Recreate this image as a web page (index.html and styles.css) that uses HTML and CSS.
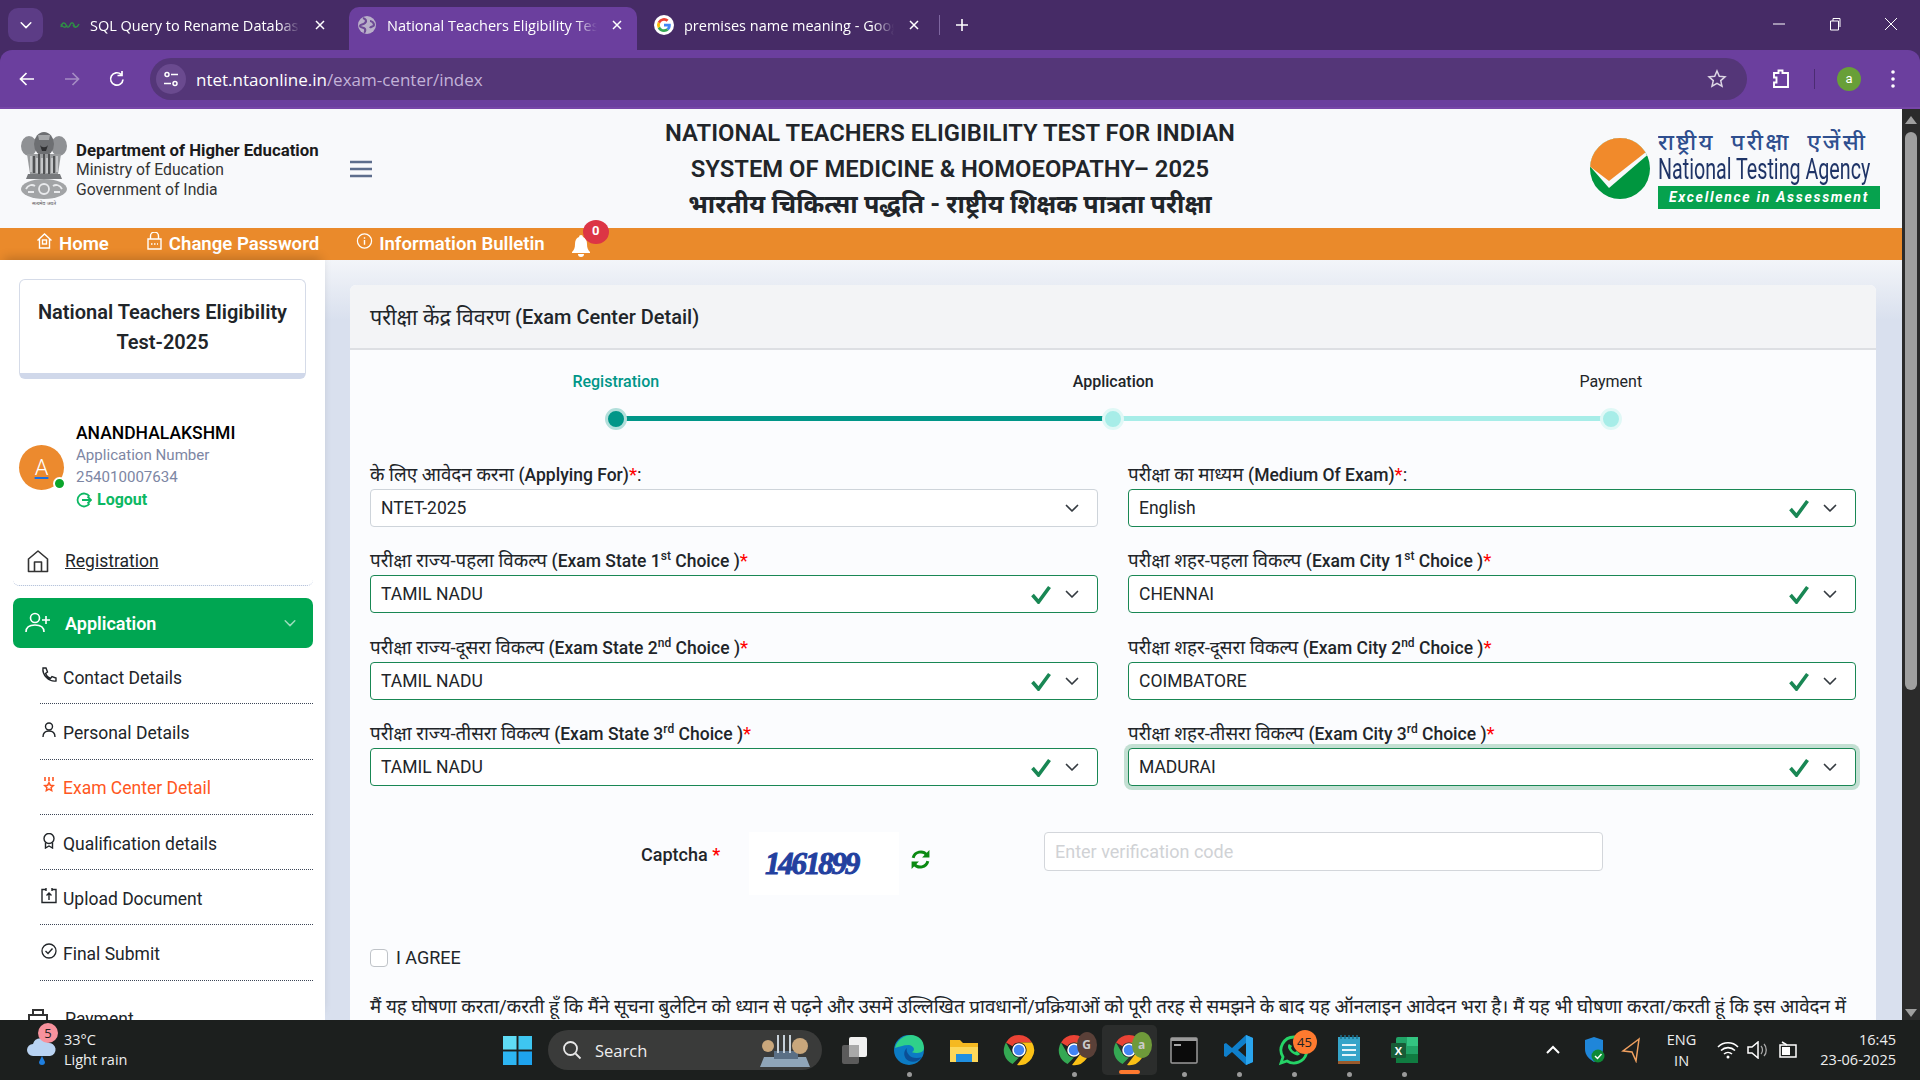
FILE: index.html
```html
<!DOCTYPE html>
<html lang="hi">
<head>
    <meta charset="UTF-8">
    <title>National Teachers Eligibility Test</title>
    <link rel="stylesheet" href="styles.css">
</head>
<body>
    <svg class="defs" width="0" height="0">
        <symbol id="chev" viewBox="0 0 16 16"><path d="M2.500 5.500 8 11l5.500-5.500" fill="none" stroke="currentColor" stroke-width="1.700" stroke-linecap="round" stroke-linejoin="round"/></symbol>
        <symbol id="tick" viewBox="0 0 20 20"><path d="M1.500 11 7.500 18 18.500 3" fill="none" stroke="#198754" stroke-width="3.600"/></symbol>
        <symbol id="close" viewBox="0 0 12 12"><path d="M2 2l8 8M10 2l-8 8" stroke="currentColor" stroke-width="1.500" fill="none"/></symbol>
        <symbol id="chrome" viewBox="0 0 32 32">
            <path d="M16 1a15 15 0 0 1 13 7.500H16a7.500 7.500 0 0 0-6.500 3.750L3 8.500A15 15 0 0 1 16 1z" fill="#ea4335"/>
            <path d="M3 8.500l6.500 11.250A7.500 7.500 0 0 0 16 23.500l-6.500 6.500A15 15 0 0 1 3 8.500z" fill="#34a853"/>
            <path d="M29 8.500A15 15 0 0 1 14 31l8.500-11.250A7.500 7.500 0 0 0 16 8.500z" fill="#fbc116"/>
            <circle cx="16" cy="16" r="6" fill="#4285f4" stroke="#fff" stroke-width="1.500"/>
        </symbol>
    </svg>

    <div class="tabstrip">
        <div class="tab-list-btn"><svg width="14" height="14"><use href="#chev"/></svg></div>
        <div class="tab">
            <svg class="tab-icon" viewBox="0 0 20 20"><path d="M1 12c1-5 4-5 5-2s3 3 4 0 3-3 4 0 3 3 5-1M1 9c2 4 5 4 6 1M19 9c-2 4-5 4-6 1" fill="none" stroke="#2f8d46" stroke-width="1.500"/></svg>
            <span class="tab-title">SQL Query to Rename Database</span>
            <svg class="tab-close" width="12" height="12"><use href="#close"/></svg>
        </div>
        <div class="tab active">
            <svg class="tab-icon" viewBox="0 0 20 20"><circle cx="10" cy="10" r="9" fill="#b9afc9"/><path d="M6 3c3 1 4 3 2 5s-5 1-5 3 4 1 5 3-1 3 0 4M13 6c2 0 4 2 4 4s-3 1-4 3" fill="none" stroke="#6e4a96" stroke-width="2.200"/></svg>
            <span class="tab-title">National Teachers Eligibility Test</span>
            <svg class="tab-close" width="12" height="12"><use href="#close"/></svg>
        </div>
        <div class="tab">
            <svg class="tab-icon" viewBox="0 0 20 20">
                <circle cx="10" cy="10" r="10" fill="#fff"/>
                <path d="M16.800 10.200c0-.5 0-1-.1-1.500H10v2.800h3.800a3.300 3.300 0 0 1-1.400 2.100l2.200 1.700c1.400-1.200 2.200-3 2.200-5.100z" fill="#4285f4"/>
                <path d="M10 17c1.900 0 3.400-.6 4.600-1.700l-2.200-1.700c-.6.400-1.400.7-2.400.7-1.800 0-3.400-1.200-3.900-2.900L3.800 13.200A7 7 0 0 0 10 17z" fill="#34a853"/>
                <path d="M6.100 11.400a4.200 4.200 0 0 1 0-2.800L3.800 6.800a7 7 0 0 0 0 6.400z" fill="#fbbc05"/>
                <path d="M10 5.800c1 0 1.900.4 2.600 1l2-2A7 7 0 0 0 3.800 6.800l2.300 1.800C6.600 6.900 8.200 5.800 10 5.800z" fill="#ea4335"/>
            </svg>
            <span class="tab-title">premises name meaning - Goog</span>
            <svg class="tab-close" width="12" height="12"><use href="#close"/></svg>
        </div>
        <div class="tab-sep"></div>
        <svg class="new-tab" viewBox="0 0 14 14"><path d="M7 1v12M1 7h12" stroke="#fff" stroke-width="1.600"/></svg>
        <div class="win-btns">
            <svg viewBox="0 0 14 14"><path d="M1 7h12" stroke="#fff" stroke-width="1"/></svg>
            <svg viewBox="0 0 14 14"><path d="M2.500 4h8v9h-8zM5 4V1.500h7V10" fill="none" stroke="#fff" stroke-width="1"/></svg>
            <svg viewBox="0 0 14 14"><path d="M1 1l12 12M13 1L1 13" stroke="#fff" stroke-width="1"/></svg>
        </div>
    </div>

    <div class="toolbar">
        <svg class="tool-icon" viewBox="0 0 20 20"><path d="M17 10H4M9.500 4 3.500 10l6 6" fill="none" stroke="#fff" stroke-width="1.700"/></svg>
        <svg class="tool-icon dim" viewBox="0 0 20 20"><path d="M3 10h13M10.500 4l6 6-6 6" fill="none" stroke="#a58cc4" stroke-width="1.700"/></svg>
        <svg class="tool-icon" viewBox="0 0 20 20"><path d="M16 10.500A6.200 6.200 0 1 1 14 5.400M15 2v4.500h-4.500" fill="none" stroke="#fff" stroke-width="1.700"/></svg>
        <div class="addressbar">
            <div class="site-btn">
                <svg width="18" height="18" viewBox="0 0 18 18"><g fill="none" stroke="#fff" stroke-width="1.500"><circle cx="5" cy="4.500" r="2"/><circle cx="13" cy="13.500" r="2"/><path d="M9 4.500h7M2 13.500h7"/></g></svg>
            </div>
            <span class="url">ntet.ntaonline.in<span class="url-path">/exam-center/index</span></span>
            <svg class="star" viewBox="0 0 20 20"><path d="M10 2l2.300 5.300 5.700.5-4.300 3.800 1.300 5.600L10 14.300 5 17.200l1.300-5.600L2 7.800l5.700-.5z" fill="none" stroke="#fff" stroke-width="1.500"/></svg>
        </div>
        <svg class="ext" viewBox="0 0 22 22"><path d="M4 5h4.500V2.500h4V5H18v14H4v-4.500h2.500v-5H4z" fill="none" stroke="#fff" stroke-width="1.900"/></svg>
        <div class="tool-sep"></div>
        <div class="profile">a</div>
        <svg class="kebab" viewBox="0 0 6 20"><circle cx="3" cy="3" r="1.800" fill="#fff"/><circle cx="3" cy="10" r="1.800" fill="#fff"/><circle cx="3" cy="17" r="1.800" fill="#fff"/></svg>
    </div>

    <div class="viewport">
        <div class="page">
            <header class="site-head">
                <svg class="emblem" viewBox="0 0 48 74">
                    <ellipse cx="9" cy="14" rx="8" ry="10" fill="#8f9194"/>
                    <ellipse cx="39" cy="14" rx="8" ry="10" fill="#8f9194"/>
                    <ellipse cx="24" cy="12" rx="10" ry="12" fill="#6d6f72"/>
                    <path d="M18 3h12l-1 5H19z" fill="#a5a7a9"/>
                    <path d="M20 13c2 3 6 3 8 0l-2 6h-4z" fill="#2f3032"/>
                    <path d="M7 22h34l-3 20H10z" fill="#9a9c9e"/>
                    <path d="M14 24v17M19 22v20M24 22v20M29 22v20M34 24v17" stroke="#3f4042" stroke-width="1.600"/>
                    <path d="M11 24v16M17 26v15M22 26v15M27 26v15M32 26v15M37 24v16" stroke="#f0f1f3" stroke-width="1"/>
                    <path d="M8 42h32l2 5H6z" fill="#77797c"/>
                    <ellipse cx="24" cy="57" rx="23" ry="10" fill="#a2a4a6"/>
                    <g fill="none" stroke="#e9eaec" stroke-width="1.800"><circle cx="24" cy="57" r="5"/><path d="M6 57c2-4 6-5 9-3M42 57c-2-4-6-5-9-3M8 60h6M34 60h6"/></g>
                    <text x="24" y="73" class="emblem-text" text-anchor="middle">सत्यमेव जयते</text>
                </svg>
                <div class="dept">
                    <div class="dept-name">Department of Higher Education</div>
                    <div>Ministry of Education</div>
                    <div>Government of India</div>
                </div>
                <svg class="hamburger" viewBox="0 0 22 18"><path d="M0 2h22M0 9h22M0 16h22" stroke="#5d6d8c" stroke-width="2.600"/></svg>
                <div class="site-title">
                    <div>NATIONAL TEACHERS ELIGIBILITY TEST FOR INDIAN</div>
                    <div>SYSTEM OF MEDICINE &amp; HOMOEOPATHY– 2025</div>
                    <div class="site-title-hi">भारतीय चिकित्सा पद्धति - राष्ट्रीय शिक्षक पात्रता परीक्षा</div>
                </div>
                <div class="nta-logo">
                    <svg class="nta-mark" viewBox="0 0 60 61">
                        <clipPath id="nta-clip"><ellipse cx="30" cy="30.500" rx="30" ry="30.500"/></clipPath>
                        <g clip-path="url(#nta-clip)">
                            <rect width="60" height="61" fill="#00963f"/>
                            <path d="M-2 26 19 50 62 13V-2H-2z" fill="#f8f9fb"/>
                            <path d="M-2 27 19 43 56 14 60-2H-2z" fill="#f18a2b"/>
                        </g>
                    </svg>
                    <div class="nta-text">
                        <div class="nta-hi">राष्ट्रीय परीक्षा एजेंसी</div>
                        <div class="nta-en"><span>National Testing Agency</span></div>
                        <div class="nta-tag">Excellence in Assessment</div>
                    </div>
                </div>
            </header>

            <nav class="orange-nav">
                <a class="nav-link">
                    <svg viewBox="0 0 16 18"><path d="M1 8.500 8 2l7 6.500M3 7v9h10V7" fill="none" stroke="#fff" stroke-width="1.400"/><rect x="6" y="8" width="4" height="4" fill="none" stroke="#fff" stroke-width="1.400"/></svg>
                    Home
                </a>
                <a class="nav-link">
                    <svg viewBox="0 0 16 18"><path d="M4 7V4a4 4 0 0 1 8 0v3M1.500 7h13v10h-13z" fill="none" stroke="#fff" stroke-width="1.400"/><path d="M4.500 12h7" stroke="#fff" stroke-width="1.600" stroke-dasharray="1.500 1.500"/></svg>
                    Change Password
                </a>
                <a class="nav-link">
                    <svg viewBox="0 0 18 18"><circle cx="9" cy="9" r="7.500" fill="none" stroke="#fff" stroke-width="1.300"/><path d="M9 8v5M9 5v1.500" stroke="#fff" stroke-width="1.500"/></svg>
                    Information Bulletin
                </a>
                <div class="bell">
                    <svg viewBox="0 0 20 24"><path d="M10 1a2 2 0 0 1 2 2c3 1 4 4 4 7 0 4 1 6 3 8v1H1v-1c2-2 3-4 3-8 0-3 1-6 4-7a2 2 0 0 1 2-2zM7 20h6a3 3 0 0 1-6 0z" fill="#fff"/></svg>
                    <span class="badge">0</span>
                </div>
            </nav>

            <div class="content">
                <aside class="sidebar">
                    <div class="side-title">National Teachers Eligibility Test-2025</div>
                    <div class="user">
                        <div class="avatar"><u>A</u><span class="online"></span></div>
                        <div class="user-info">
                            <div class="user-name">ANANDHALAKSHMI</div>
                            <div class="user-meta">Application Number</div>
                            <div class="user-meta">254010007634</div>
                            <div class="logout">
                                <svg viewBox="0 0 16 16"><path d="M13.500 4.500a6.500 6.500 0 1 0 0 7M6 8h9M11.500 4.500 15 8l-3.500 3.500" fill="none" stroke="#0cb863" stroke-width="1.800"/></svg>
                                Logout
                            </div>
                        </div>
                    </div>

                    <div class="menu-top">
                        <svg viewBox="0 0 22 24"><path d="M1.500 10 11 2l9.500 8v12.500h-19zM7.500 22.500V13h7v9.500" fill="none" stroke="#333" stroke-width="1.600" stroke-linejoin="round"/></svg>
                        <span>Registration</span>
                    </div>
                    <div class="menu-active">
                        <svg viewBox="0 0 26 24"><g fill="none" stroke="#fff" stroke-width="1.600"><circle cx="10" cy="7" r="4.500"/><path d="M1 21c0-5 4-7 9-7s9 2 9 7M21 5v8M17 9h8"/></g></svg>
                        <span>Application</span>
                        <svg class="menu-chev" width="14" height="14"><use href="#chev"/></svg>
                    </div>
                    <ul class="submenu">
                        <li><svg viewBox="0 0 16 16"><path d="M2 1h3l1.500 4L4.500 6.500c1 2.500 2.500 4 5 5L11 9.500l4 1.500v3c-7 1-14-6-13-13z" fill="none" stroke="currentColor" stroke-width="1.400"/></svg>Contact Details</li>
                        <li><svg viewBox="0 0 16 16"><circle cx="8" cy="4.500" r="3.500" fill="none" stroke="currentColor" stroke-width="1.400"/><path d="M2 15c0-4 2.500-6 6-6s6 2 6 6" fill="none" stroke="currentColor" stroke-width="1.400"/></svg>Personal Details</li>
                        <li class="current"><svg viewBox="0 0 16 16"><path d="M4 0v4M8 0v4M12 0v4" stroke="currentColor" stroke-width="1.600"/><path d="M8 5.500l1.300 2.700 3 .4-2.200 2 .6 3L8 12.200l-2.700 1.400.6-3-2.200-2 3-.4z" fill="none" stroke="currentColor" stroke-width="1.500"/></svg>Exam Center Detail</li>
                        <li><svg viewBox="0 0 16 16"><circle cx="8" cy="5.500" r="5" fill="none" stroke="currentColor" stroke-width="1.400"/><path d="M4.500 9.500V15L8 13l3.500 2V9.500" fill="none" stroke="currentColor" stroke-width="1.400"/></svg>Qualification details</li>
                        <li><svg viewBox="0 0 16 16"><path d="M5 1.500H1v13h14v-13h-4M8 12V5M5.500 7.500 8 5l2.500 2.500" fill="none" stroke="currentColor" stroke-width="1.400"/><path d="M5 0v3M11 0v3" stroke="currentColor" stroke-width="1.400"/></svg>Upload Document</li>
                        <li><svg viewBox="0 0 16 16"><circle cx="8" cy="8" r="7" fill="none" stroke="currentColor" stroke-width="1.300"/><path d="M4.500 8 7 10.500l4.500-5" fill="none" stroke="currentColor" stroke-width="1.400"/></svg>Final Submit</li>
                    </ul>
                    <div class="menu-top menu-plain">
                        <svg viewBox="0 0 22 24"><path d="M2 8h18v14H2zM6 8V3h10v5M6 14h10" fill="none" stroke="#333" stroke-width="2"/></svg>
                        <span>Payment</span>
                    </div>
                </aside>

                <main class="card">
                    <div class="card-head">परीक्षा केंद्र विवरण <b>(Exam Center Detail)</b></div>
                    <div class="stepper">
                        <div class="step done"><div class="step-label">Registration</div><div class="step-dot"></div></div>
                        <div class="step next"><div class="step-label">Application</div><div class="step-dot"></div></div>
                        <div class="step last"><div class="step-label">Payment</div><div class="step-dot"></div></div>
                    </div>

                    <div class="form-grid">
                        <div class="field">
                            <label>के लिए आवेदन करना <b>(Applying For)</b><i>*</i>:</label>
                            <div class="select plain"><span>NTET-2025</span><svg class="chev" width="16" height="16"><use href="#chev"/></svg></div>
                        </div>
                        <div class="field">
                            <label>परीक्षा का माध्यम <b>(Medium Of Exam)</b><i>*</i>:</label>
                            <div class="select"><span>English</span><svg class="tick" width="20" height="20"><use href="#tick"/></svg><svg class="chev" width="16" height="16"><use href="#chev"/></svg></div>
                        </div>
                        <div class="field">
                            <label>परीक्षा राज्य-पहला विकल्प <b>(Exam State 1<sup>st</sup> Choice )</b><i>*</i></label>
                            <div class="select"><span>TAMIL NADU</span><svg class="tick" width="20" height="20"><use href="#tick"/></svg><svg class="chev" width="16" height="16"><use href="#chev"/></svg></div>
                        </div>
                        <div class="field">
                            <label>परीक्षा शहर-पहला विकल्प <b>(Exam City 1<sup>st</sup> Choice )</b><i>*</i></label>
                            <div class="select"><span>CHENNAI</span><svg class="tick" width="20" height="20"><use href="#tick"/></svg><svg class="chev" width="16" height="16"><use href="#chev"/></svg></div>
                        </div>
                        <div class="field">
                            <label>परीक्षा राज्य-दूसरा विकल्प <b>(Exam State 2<sup>nd</sup> Choice )</b><i>*</i></label>
                            <div class="select"><span>TAMIL NADU</span><svg class="tick" width="20" height="20"><use href="#tick"/></svg><svg class="chev" width="16" height="16"><use href="#chev"/></svg></div>
                        </div>
                        <div class="field">
                            <label>परीक्षा शहर-दूसरा विकल्प <b>(Exam City 2<sup>nd</sup> Choice )</b><i>*</i></label>
                            <div class="select"><span>COIMBATORE</span><svg class="tick" width="20" height="20"><use href="#tick"/></svg><svg class="chev" width="16" height="16"><use href="#chev"/></svg></div>
                        </div>
                        <div class="field">
                            <label>परीक्षा राज्य-तीसरा विकल्प <b>(Exam State 3<sup>rd</sup> Choice )</b><i>*</i></label>
                            <div class="select"><span>TAMIL NADU</span><svg class="tick" width="20" height="20"><use href="#tick"/></svg><svg class="chev" width="16" height="16"><use href="#chev"/></svg></div>
                        </div>
                        <div class="field">
                            <label>परीक्षा शहर-तीसरा विकल्प <b>(Exam City 3<sup>rd</sup> Choice )</b><i>*</i></label>
                            <div class="select focused"><span>MADURAI</span><svg class="tick" width="20" height="20"><use href="#tick"/></svg><svg class="chev" width="16" height="16"><use href="#chev"/></svg></div>
                        </div>
                    </div>

                    <div class="captcha-row">
                        <div class="captcha-label">Captcha <i>*</i></div>
                        <div class="captcha-img"><span>1461899</span></div>
                        <svg class="captcha-refresh" viewBox="0 0 20 20"><g fill="none" stroke="#0a8a12" stroke-width="2.800"><path d="M3 8.500A7.500 7.500 0 0 1 16 5.500"/><path d="M17 11.500A7.500 7.500 0 0 1 4 14.500"/></g><path d="M18.500 1v7h-7zM1.500 19v-7h7z" fill="#0a8a12"/></svg>
                        <div class="captcha-input">Enter verification code</div>
                    </div>

                    <div class="agree"><span class="checkbox"></span>I AGREE</div>
                    <p class="declare">मैं यह घोषणा करता/करती हूँ कि मैंने सूचना बुलेटिन को ध्यान से पढ़ने और उसमें उल्लिखित प्रावधानों/प्रक्रियाओं को पूरी तरह से समझने के बाद यह ऑनलाइन आवेदन भरा है। मैं यह भी घोषणा करता/करती हूं कि इस आवेदन में</p>
                </main>
            </div>
        </div>

        <div class="scrollbar">
            <div class="sb-up"></div>
            <div class="sb-thumb"></div>
            <div class="sb-down"></div>
        </div>
    </div>

    <footer class="taskbar">
        <div class="weather">
            <div class="weather-icon">
                <svg viewBox="0 0 32 36" width="32" height="36"><path d="M8 24a6 6 0 0 1 0-12 8 8 0 0 1 15-1 6.500 6.500 0 0 1 2 13z" fill="#b9d3f2"/><path d="M17 24l3 6a3 3 0 0 1-6 0z" fill="#1f7fe0"/></svg>
                <span class="weather-badge">5</span>
            </div>
            <div class="weather-text"><div>33°C</div><div>Light rain</div></div>
        </div>
        <svg class="win-logo" viewBox="0 0 30 30"><rect width="14" height="14" fill="#5fdcf5"/><rect x="16" width="14" height="14" fill="#3ec6f0"/><rect y="16" width="14" height="14" fill="#2db5f2"/><rect x="16" y="16" width="14" height="14" fill="#1ea3ee"/></svg>
        <div class="search">
            <svg viewBox="0 0 20 20" width="20" height="20"><circle cx="8.500" cy="8.500" r="6.500" fill="none" stroke="#e8e8e8" stroke-width="1.800"/><path d="M13.500 13.500 18.500 18.500" stroke="#e8e8e8" stroke-width="1.800"/></svg>
            <span>Search</span>
            <svg class="search-art" viewBox="0 0 50 34" width="50" height="34"><path d="M0 34l4-10h42l4 10z" fill="#8fa5b8"/><rect x="14" y="18" width="24" height="8" fill="#5a6f85"/><circle cx="8" cy="13" r="6" fill="#c9a77c"/><circle cx="40" cy="13" r="8" fill="#c9a77c"/><path d="M18 2v18M24 2v18M30 2v18" stroke="#c6d0d8" stroke-width="2"/></svg>
        </div>
        <div class="apps">
            <div class="app">
                <svg viewBox="0 0 32 32"><rect x="4" y="11" width="17" height="19" rx="2" fill="#5b5b5b"/><rect x="11" y="3" width="18" height="20" rx="2" fill="#f1f1f1"/><rect x="11" y="11" width="10" height="12" fill="#a9a9a9"/></svg>
            </div>
            <div class="app dot">
                <svg viewBox="0 0 32 32"><circle cx="16" cy="16" r="15" fill="#0c7bc4"/><path d="M2 14C4 5 12 1 18 1c7 0 13 5 13 13 0 4-4 5-8 5-3 0-4-1-4-1 3-1 3-6-3-7-6 0-10 2-14 3z" fill="#2fd08a"/><path d="M14 14c-4 3-4 10 2 13 5 2 10 0 13-4-5 2-11 1-13-2-2-2-3-5-2-7z" fill="#0b4f96"/></svg>
            </div>
            <div class="app">
                <svg viewBox="0 0 32 32"><path d="M2 6h10l3 3h15v19H2z" fill="#f5b921"/><path d="M2 13h28v15H2z" fill="#fcd75a"/><rect x="8" y="20" width="16" height="8" fill="#1f8fe0"/></svg>
            </div>
            <div class="app"><svg><use href="#chrome"/></svg></div>
            <div class="app dot">
                <svg><use href="#chrome"/></svg>
                <span class="app-mini">G</span>
            </div>
            <div class="app running">
                <svg><use href="#chrome"/></svg>
                <span class="app-mini olive">a</span>
            </div>
            <div class="app dot">
                <svg viewBox="0 0 32 32"><rect x="3" y="4" width="26" height="25" rx="1" fill="#0b0b0b" stroke="#9a9a9a" stroke-width="1.500"/><rect x="3" y="4" width="26" height="3" fill="#9a9a9a"/><path d="M6 11h7" stroke="#ddd" stroke-width="1.500"/></svg>
            </div>
            <div class="app dot">
                <svg viewBox="0 0 32 32"><path d="M23 1l7 3v24l-7 3L9 18l-6 5-2-1V10l2-1 6 5zM23 9l-8 7 8 7z" fill="#0f7fcb"/><path d="M23 1l7 3v24l-7 3z" fill="#2aa5ee"/></svg>
            </div>
            <div class="app dot">
                <svg viewBox="0 0 32 32"><path d="M16 3a13 13 0 0 0-11 20L3 29l6-2A13 13 0 1 0 16 3z" fill="none" stroke="#25d366" stroke-width="2.800"/><path d="M11 10c-2 2-1 6 3 9s7 3 8 1l-3-3-2 1c-2-1-3-2-4-4l1-2z" fill="#25d366"/></svg>
                <span class="wa-badge">45</span>
            </div>
            <div class="app dot">
                <svg viewBox="0 0 32 32"><rect x="5" y="3" width="22" height="27" fill="#35a4c9"/><path d="M5 27h22v3H5z" fill="#9a5a2c"/><path d="M9 11h14M9 16h14M9 21h14" stroke="#e5f4fa" stroke-width="2"/><path d="M8 1v4M12 1v4M16 1v4M20 1v4M24 1v4" stroke="#1b6f8c" stroke-width="1.500"/></svg>
            </div>
            <div class="app dot">
                <svg viewBox="0 0 32 32"><rect x="8" y="3" width="22" height="26" rx="2" fill="#21a366"/><rect x="19" y="3" width="11" height="9" fill="#33c481"/><rect x="8" y="20" width="22" height="9" fill="#107c41"/><rect x="3" y="9" width="15" height="15" rx="1" fill="#185c37"/><text x="10.500" y="21" class="excel-x" text-anchor="middle">X</text></svg>
            </div>
        </div>
        <div class="tray">
            <svg class="tray-chev" viewBox="0 0 14 10"><path d="M1 8l6-6 6 6" fill="none" stroke="#fff" stroke-width="2"/></svg>
            <svg class="tray-shield" viewBox="0 0 22 28"><path d="M10 1l9 3v9c0 6-4 10-9 13C5 23 1 19 1 13V4z" fill="#1f86d9"/><circle cx="14" cy="20" r="6.500" fill="#0e8a36"/><path d="M11 20l2.500 2.500L17.500 18" stroke="#fff" stroke-width="1.500" fill="none"/></svg>
            <svg class="tray-nav" viewBox="0 0 20 26"><path d="M18 2 2 14l9 1 4 9z" fill="none" stroke="#f0a060" stroke-width="1.500"/></svg>
            <div class="lang"><div>ENG</div><div>IN</div></div>
            <div class="tray-status">
                <svg viewBox="0 0 22 18"><g fill="none" stroke="#fff" stroke-width="1.600"><path d="M1 6a14 14 0 0 1 20 0M4 9.500a10 10 0 0 1 14 0M7 13a6 6 0 0 1 8 0"/></g><circle cx="11" cy="16" r="1.500" fill="#fff"/></svg>
                <svg viewBox="0 0 22 18"><path d="M1 6h4l6-5v16l-6-5H1z" fill="none" stroke="#fff" stroke-width="1.500"/><path d="M14 5c2 2 2 6 0 8M17 3c3 3 3 9 0 12" fill="none" stroke="#aaa" stroke-width="1.300"/></svg>
                <svg viewBox="0 0 22 18"><path d="M3 4h16v12H3z" fill="none" stroke="#fff" stroke-width="1.500"/><path d="M5 6h8v8H5z" fill="#fff"/><path d="M5 1l5 3" stroke="#fff" stroke-width="1.500"/></svg>
            </div>
            <div class="clock"><div>16:45</div><div>23-06-2025</div></div>
        </div>
    </footer>
</body>
</html>
```

FILE: styles.css
```css
* {
    box-sizing: border-box;
}

html, body {
    margin: 0;
    height: 1080px;
    overflow: hidden;
}

body {
    display: flex;
    flex-direction: column;
    width: 1920px;
    font-family: Roboto, "Noto Sans", sans-serif;
    color: #212529;
    background: #462b66;
}

.defs {
    position: absolute;
}

/* browser tabs */
.tabstrip {
    display: flex;
    align-items: flex-start;
    height: 50px;
    flex: none;
    padding-left: 8px;
    background: #462b66;
    color: #fff;
    font-family: "Open Sans", sans-serif;
    font-size: 14.500px;
}

.tab-list-btn {
    width: 35px;
    height: 34px;
    margin: 8px 5px 0 0;
    display: flex;
    align-items: center;
    justify-content: center;
    background: #5c3c86;
    border-radius: 10px;
}

.tab {
    position: relative;
    width: 297px;
    height: 50px;
    display: flex;
    align-items: center;
    padding: 0 14px 0 12px;
    flex: none;
}

.tab.active::before {
    content: "";
    position: absolute;
    left: 4px;
    right: 5px;
    top: 7px;
    bottom: 0;
    background: #6b3f9e;
    border-radius: 10px 10px 0 0;
}

.tab > * {
    position: relative;
}

.tab-icon {
    width: 20px;
    height: 20px;
    flex: none;
}

.tab-title {
    width: 210px;
    margin: 0 14px 0 10px;
    white-space: nowrap;
    overflow: hidden;
    -webkit-mask-image: linear-gradient(to right, #000 90%, transparent);
    mask-image: linear-gradient(to right, #000 90%, transparent);
}

.tab-close {
    flex: none;
    color: #fff;
}

.tab-sep {
    width: 1px;
    height: 20px;
    margin-top: 15px;
    background: #7e66a0;
}

.new-tab {
    width: 14px;
    height: 14px;
    margin: 18px 0 0 15px;
}

.win-btns {
    margin-left: auto;
    display: flex;
    gap: 42px;
    padding: 17px 22px 0 0;
}

.win-btns svg {
    width: 14px;
    height: 14px;
}

/* address row */
.toolbar {
    height: 59px;
    flex: none;
    display: flex;
    align-items: center;
    padding: 1px 0 0 17px;
    background: #6b3f9e;
    border-bottom: 2px solid #7746a8;
    border-radius: 12px 12px 0 0;
    color: #fff;
}

.tool-icon {
    width: 20px;
    height: 20px;
    margin-right: 25px;
    flex: none;
}

.addressbar {
    width: 1597px;
    height: 42px;
    margin-left: -2px;
    display: flex;
    align-items: center;
    padding: 0 20px 0 6px;
    background: #543678;
    border-radius: 21px;
    flex: none;
}

.site-btn {
    width: 30px;
    height: 30px;
    display: flex;
    align-items: center;
    justify-content: center;
    background: #6a4a8f;
    border-radius: 50%;
}

.url {
    margin-left: 10px;
    font-family: "Open Sans", sans-serif;
    font-size: 17px;
}

.url-path {
    color: #c3b3d8;
}

.star {
    width: 20px;
    height: 20px;
    margin-left: auto;
    opacity: .8;
}

.ext {
    width: 22px;
    height: 22px;
    margin-left: 23px;
}

.tool-sep {
    width: 1px;
    height: 20px;
    margin-left: 22px;
    background: #4b2c72;
}

.profile {
    width: 24px;
    height: 24px;
    margin-left: 22px;
    border-radius: 50%;
    background: #689f38;
    font-size: 13px;
    line-height: 24px;
    text-align: center;
}

.kebab {
    width: 6px;
    height: 20px;
    margin-left: 29px;
}

/* page + scrollbar */
.viewport {
    flex: none;
    height: 911px;
    display: flex;
    overflow: hidden;
}

.page {
    width: 1902px;
    flex: none;
    display: flex;
    flex-direction: column;
    background: #d9e0ee;
}

.scrollbar {
    width: 18px;
    flex: none;
    background: #2b2b2b;
    display: flex;
    flex-direction: column;
    align-items: center;
}

.sb-up {
    margin-top: 7px;
    width: 0;
    height: 0;
    border-left: 6px solid transparent;
    border-right: 6px solid transparent;
    border-bottom: 8px solid #9f9f9f;
}

.sb-thumb {
    width: 12px;
    height: 558px;
    margin-top: 8px;
    background: #9f9f9f;
    border-radius: 6px;
}

.sb-down {
    margin-top: auto;
    margin-bottom: 3px;
    width: 0;
    height: 0;
    border-left: 6px solid transparent;
    border-right: 6px solid transparent;
    border-top: 8px solid #9f9f9f;
}

/* site header */
.site-head {
    height: 119px;
    flex: none;
    display: flex;
    align-items: center;
    background: #f8f9fb;
    position: relative;
}

.emblem {
    width: 48px;
    height: 74px;
    margin-left: 20px;
    flex: none;
}

.emblem-text {
    font-size: 5px;
    fill: #555;
}

.dept {
    width: 274px;
    margin: 3px 0 0 8px;
    font-size: 15.700px;
    line-height: 19.500px;
    color: #333;
    flex: none;
}

.dept-name {
    font-size: 16.800px;
    font-weight: 700;
    color: #1b1b1b;
    white-space: nowrap;
}

.hamburger {
    width: 22px;
    height: 18px;
    flex: none;
}

.site-title {
    width: 700px;
    margin-left: 228px;
    text-align: center;
    font-size: 23.800px;
    font-weight: 600;
    line-height: 36px;
    color: #212529;
    flex: none;
}

.site-title-hi {
    font-size: 25.100px;
    font-weight: 700;
}

.nta-logo {
    margin-left: auto;
    margin-right: 22px;
    display: flex;
    align-items: center;
    gap: 8px;
}

.nta-mark {
    width: 60px;
    height: 61px;
}

.nta-text {
    width: 222px;
    overflow: hidden;
    padding-top: 3px;
}

.nta-hi {
    height: 21px;
    font-size: 23px;
    line-height: 21px;
    font-weight: 500;
    letter-spacing: 2.500px;
    word-spacing: 8px;
    color: #2f4f8f;
    white-space: nowrap;
}

.nta-en {
    height: 32px;
    font-size: 30px;
    line-height: 32px;
    color: #1f3467;
    white-space: nowrap;
}

.nta-en span {
    display: inline-block;
    transform: scaleX(.656);
    transform-origin: left center;
}

.nta-tag {
    height: 23px;
    margin-top: 1px;
    background: #06a24e;
    color: #fff;
    font-size: 14px;
    font-weight: 700;
    font-style: italic;
    letter-spacing: 1.700px;
    line-height: 23px;
    text-align: center;
    white-space: nowrap;
}

/* orange bar */
.orange-nav {
    height: 32px;
    flex: none;
    display: flex;
    align-items: center;
    padding-left: 36px;
    background: #ea8a2b;
    color: #fff;
    font-size: 18.600px;
    font-weight: 600;
}

.nav-link {
    display: flex;
    align-items: center;
    margin-right: 37px;
}

.nav-link svg {
    width: 17px;
    height: 18px;
    margin: -6px 6px 0 0;
}

.bell {
    position: relative;
    width: 20px;
    height: 24px;
    margin-left: -11px;
    margin-top: 4px;
}

.bell svg {
    width: 20px;
    height: 24px;
}

.badge {
    position: absolute;
    left: 12px;
    top: -14px;
    width: 26px;
    height: 24px;
    border-radius: 50%;
    background: #dc3545;
    font-size: 13px;
    font-weight: 700;
    line-height: 22px;
    text-align: center;
}

/* sidebar + main */
.content {
    flex: 1;
    min-height: 0;
    display: flex;
    background: linear-gradient(#f3f5f9, #d9e0ee 60px);
}

.sidebar {
    width: 325px;
    flex: none;
    background: #fff;
    padding-top: 19px;
    box-shadow: 0 -6px 10px -4px rgba(0, 0, 0, .2);
}

.side-title {
    height: 100px;
    margin: 0 19px;
    padding: 17px 10px 0;
    border: 1px solid #d5dbe8;
    border-bottom: 6px solid #d0d8ea;
    border-radius: 6px;
    font-size: 20px;
    font-weight: 600;
    line-height: 30px;
    text-align: center;
}

.user {
    display: flex;
    align-items: center;
    margin: 44px 0 0 19px;
    gap: 12px;
}

.avatar {
    position: relative;
    width: 45px;
    height: 45px;
    border-radius: 50%;
    background: #ec8a2e;
    color: #fff;
    font-size: 22px;
    font-weight: 300;
    line-height: 45px;
    text-align: center;
    flex: none;
}

.avatar u {
    text-decoration-color: #1a6ee0;
}

.online {
    position: absolute;
    right: -2px;
    bottom: 0;
    width: 13px;
    height: 13px;
    border: 2.500px solid #fff;
    border-radius: 50%;
    background: #0aa52b;
}

.user-name {
    font-size: 17.500px;
    font-weight: 500;
    line-height: 21px;
    color: #000;
}

.user-meta {
    font-size: 15.100px;
    line-height: 22px;
    color: #7d86a3;
}

.logout {
    display: flex;
    align-items: center;
    gap: 5px;
    font-size: 16px;
    font-weight: 700;
    line-height: 23px;
    color: #0cb863;
}

.logout svg {
    width: 16px;
    height: 16px;
}

.menu-top {
    height: 50px;
    margin: 25px 12px 0 13px;
    display: flex;
    align-items: center;
    padding-left: 14px;
    border-bottom: 1px dotted #a9b8d5;
    border-radius: 0 0 6px 6px;
    font-size: 17.500px;
}

.menu-top svg {
    width: 22px;
    height: 24px;
    margin-right: 16px;
}

.menu-top span {
    text-decoration: underline;
}

.menu-plain {
    margin-top: 13px;
    border: 0;
}

.menu-plain span {
    text-decoration: none;
}

.menu-active {
    height: 50px;
    margin: 12px 12px 0 13px;
    display: flex;
    align-items: center;
    padding-left: 12px;
    background: #00a652;
    border-radius: 7px;
    color: #fff;
    font-size: 18px;
    font-weight: 600;
}

.menu-active svg:first-child {
    width: 26px;
    height: 24px;
    margin-right: 14px;
}

.menu-chev {
    margin-left: auto;
    margin-right: 16px;
    opacity: .6;
}

.submenu {
    list-style: none;
    margin: 1px 12px 0 40px;
    padding: 0;
    font-size: 17.500px;
}

.submenu li {
    height: 55.300px;
    display: flex;
    align-items: center;
    border-bottom: 1.500px dotted #3d4657;
    padding-top: 3px;
}

.submenu li svg {
    width: 16px;
    height: 16px;
    margin: -6px 6px 0 1px;
    flex: none;
}

.submenu .current {
    color: #ff5722;
}

.card {
    width: 1526px;
    margin: 25px 0 0 25px;
    background: #fbfcfe;
    border-radius: 6px 6px 0 0;
    flex: none;
}

.card-head {
    height: 65px;
    display: flex;
    align-items: center;
    gap: 5px;
    padding-left: 20px;
    background: #f3f4f6;
    border-bottom: 2px solid #dddfe3;
    border-radius: 6px 6px 0 0;
    font-size: 21.500px;
}

.card-head b {
    font-size: 20px;
    font-weight: 500;
}

.stepper {
    display: flex;
    margin: 20px 0 0 17px;
}

.step {
    position: relative;
    width: 497.500px;
    text-align: center;
}

.step-label {
    height: 24px;
    font-size: 16px;
    font-weight: 500;
    line-height: 24px;
}

.step.done .step-label {
    color: #009688;
}

.step.last .step-label {
    font-weight: 400;
}

.step-dot {
    position: relative;
    width: 22px;
    height: 22px;
    margin: 14px auto 0;
    border-radius: 50%;
    z-index: 1;
}

.step.done .step-dot {
    background: #009688;
    border: 3px solid #b2dfdb;
}

.step.next .step-dot, .step.last .step-dot {
    background: #a7ede8;
    border: 3px solid #e0f8f6;
}

.step::after {
    content: "";
    position: absolute;
    left: 50%;
    width: 100%;
    top: 46px;
    height: 5px;
    background: #a7ede8;
}

.step.done::after {
    background: #009688;
}

.step.last::after {
    display: none;
}

.form-grid {
    display: grid;
    grid-template-columns: 1fr 1fr;
    column-gap: 30px;
    row-gap: 20.300px;
    margin-top: 31px;
    padding: 0 20px;
}

.field label {
    display: block;
    height: 28px;
    font-size: 18.800px;
    line-height: 28px;
    white-space: nowrap;
}

.field b {
    font-size: 17.500px;
    font-weight: 500;
}

.field i, .captcha-label i {
    font-style: normal;
    color: #f00;
}

.field sup {
    font-size: 12px;
    line-height: 0;
}

.select {
    height: 38px;
    display: flex;
    align-items: center;
    padding: 0 17px 0 10px;
    background: #fff;
    border: 1px solid #198754;
    border-radius: 4px;
    font-size: 17.500px;
}

.select.plain {
    border-color: #ced4da;
}

.select.focused {
    box-shadow: 0 0 0 4px #c3e0d3;
}

.select span {
    margin-right: auto;
}

.select .chev {
    margin-left: 13px;
    color: #343a40;
}

.captcha-row {
    display: flex;
    align-items: flex-start;
    margin: 46px 0 0 291px;
}

.captcha-label {
    width: 108px;
    margin-top: 12px;
    font-size: 18px;
    font-weight: 500;
}

.captcha-img {
    width: 150px;
    height: 63px;
    padding-left: 16px;
    background: #fff;
    font-family: "Liberation Serif", serif;
    font-size: 31px;
    font-weight: 700;
    font-style: italic;
    letter-spacing: -2.200px;
    line-height: 63px;
    color: #23409f;
    -webkit-text-stroke: 1px #23409f;
}

.captcha-refresh {
    width: 21px;
    height: 21px;
    margin: 17px 0 0 11px;
    flex: none;
}

.captcha-input {
    width: 559px;
    height: 39px;
    margin-left: 113px;
    padding-left: 10px;
    border: 1px solid #d3d6db;
    border-radius: 4px;
    background: #fff;
    font-size: 18px;
    line-height: 37px;
    color: #d0d2d5;
}

.agree {
    display: flex;
    align-items: center;
    margin: 54px 0 0 20px;
    font-size: 18px;
    line-height: 18px;
}

.checkbox {
    width: 18px;
    height: 18px;
    margin-right: 8px;
    border: 1px solid #bfc3c8;
    border-radius: 4px;
    background: #fff;
}

.declare {
    margin: 27px 0 0;
    padding: 0 20px;
    font-size: 18.800px;
    line-height: 27px;
}

/* windows taskbar */
.taskbar {
    position: relative;
    height: 60px;
    flex: none;
    display: flex;
    align-items: center;
    background: #1c1f1e;
    color: #eee;
    font-family: "Open Sans", sans-serif;
}

.weather {
    width: 503px;
    flex: none;
    display: flex;
    align-items: center;
    padding-left: 25px;
    font-size: 14.500px;
}

.weather-icon {
    position: relative;
    width: 32px;
    height: 36px;
    margin-right: 7px;
}

.weather-badge {
    position: absolute;
    left: 13px;
    top: -9px;
    width: 20px;
    height: 20px;
    border-radius: 50%;
    background: #f8929d;
    color: #222;
    font-size: 13px;
    line-height: 20px;
    text-align: center;
}

.weather-text {
    line-height: 20px;
}

.win-logo {
    width: 29px;
    height: 29px;
    flex: none;
}

.search {
    width: 274px;
    height: 40px;
    margin-left: 16px;
    display: flex;
    align-items: center;
    gap: 13px;
    padding-left: 14px;
    background: #3a3b3a;
    border-radius: 20px;
    font-size: 16.500px;
    flex: none;
}

.search-art {
    margin-left: auto;
    margin-right: 12px;
}

.apps {
    display: flex;
    margin-left: 4.500px;
}

.app {
    position: relative;
    width: 55px;
    height: 50px;
    display: flex;
    align-items: center;
    justify-content: center;
}

.app svg {
    width: 32px;
    height: 32px;
}

.app.dot::after, .app.running::after {
    content: "";
    position: absolute;
    left: 25px;
    bottom: -2px;
    width: 5px;
    height: 5px;
    border-radius: 50%;
    background: #9a9a9a;
}

.app.running {
    background: #2b2d2c;
    border-radius: 5px;
}

.app.running::after {
    left: 17px;
    bottom: 1px;
    width: 21px;
    height: 4px;
    border-radius: 2px;
    background: #ff7a2f;
}

.app-mini {
    position: absolute;
    right: 5px;
    top: 7px;
    width: 20px;
    height: 26px;
    border-radius: 50%;
    background: #5a4038;
    color: #ccc;
    font-size: 12px;
    font-weight: 700;
    line-height: 26px;
    text-align: center;
}

.app-mini.olive {
    background: #6f9a3a;
}

.wa-badge {
    position: absolute;
    right: 5px;
    top: 5px;
    width: 24px;
    height: 24px;
    border-radius: 50%;
    background: #ff7a2f;
    color: #222;
    font-size: 13px;
    line-height: 24px;
    text-align: center;
}

.excel-x {
    font-family: "Open Sans", sans-serif;
    font-size: 11px;
    font-weight: 700;
    fill: #fff;
}

.tray {
    margin-left: auto;
    padding-right: 24px;
    display: flex;
    align-items: center;
    font-size: 14.500px;
}

.tray-chev {
    width: 14px;
    height: 10px;
}

.tray-shield {
    width: 22px;
    height: 28px;
    margin-left: 24px;
}

.tray-nav {
    width: 20px;
    height: 26px;
    margin-left: 15px;
}

.lang {
    margin-left: 26px;
    line-height: 21px;
    text-align: center;
}

.tray-status {
    display: flex;
    gap: 8px;
    margin-left: 21px;
}

.tray-status svg {
    width: 22px;
    height: 18px;
}

.clock {
    margin-left: 21px;
    line-height: 20px;
    text-align: right;
}
```
